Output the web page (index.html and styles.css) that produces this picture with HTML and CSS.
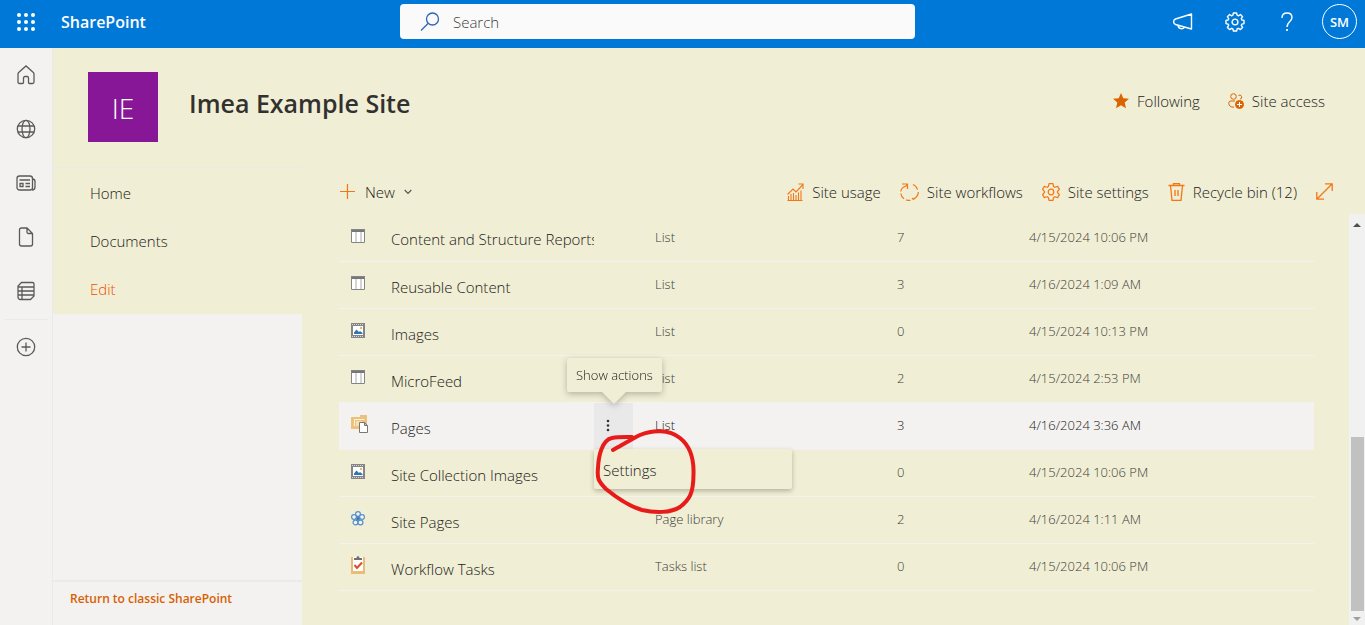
FILE: index.html
```html
<!DOCTYPE html>
<html lang="en">
<head>
<meta charset="utf-8">
<title>Site contents - Imea Example Site</title>
<link rel="stylesheet" href="styles.css">
</head>
<body>
<svg class="defs" aria-hidden="true">
  <symbol id="i-list" viewBox="0 0 14 14"><path fill="#fff" d="M0 3h14v11H0z"/><path fill="#d4d4d4" d="M4 3h2v10H4zM9 3h2v10H9z"/><path fill="#777" d="M0 0h14v3H0z"/><path fill="none" stroke="#858585" d="M.5 .5h13v13H.5z"/></symbol>
  <symbol id="i-image" viewBox="0 0 14 15"><path fill="#858588" d="M0 0h14v15H0z"/><path stroke="#d8d8d8" stroke-dasharray="1 1" d="M1 1.500h12M1 13.500h12"/><path fill="#fff" d="M2 3h10v9H2z"/><path fill="#2f75b0" d="M3 11V9.500L5.500 6.500 8 9l1-1 2.500 2v1z"/><path fill="#eab765" d="M9 4h2v2H9z"/></symbol>
</svg>

<header class="suite">
  <button class="plain waffle" aria-label="App launcher">
    <svg width="18" height="18" viewBox="0 0 18 18" fill="#fff"><circle cx="2" cy="2" r="2"/><circle cx="9" cy="2" r="2"/><circle cx="16" cy="2" r="2"/><circle cx="2" cy="9" r="2"/><circle cx="9" cy="9" r="2"/><circle cx="16" cy="9" r="2"/><circle cx="2" cy="16" r="2"/><circle cx="9" cy="16" r="2"/><circle cx="16" cy="16" r="2"/></svg>
  </button>
  <a class="brand" href="#">SharePoint</a>
  <form class="search" role="search">
    <svg width="20" height="20" viewBox="0 0 20 20" fill="none" stroke="#3264b4" stroke-width="1.300"><circle cx="12.500" cy="7" r="6"/><path d="M8.300 11.300 1 18.500"/></svg>
    <input class="search-input" type="text" placeholder="Search" aria-label="Search">
  </form>
  <div class="suite-actions">
    <button class="plain" aria-label="Announcements"><svg width="20" height="18" viewBox="0 0 20 18" fill="none" stroke="#fff" stroke-width="1.400" stroke-linejoin="round"><path d="M18.500 1v15L2.500 11.500C0 10.500 0 7 2.500 6z"/><path d="M5 12.300c.5 4 5.500 4.300 6.500 1.800"/></svg></button>
    <button class="plain" aria-label="Settings"><svg width="20" height="20" viewBox="0 0 20 20" fill="none" stroke="#fff" stroke-width="1.400" stroke-linejoin="round"><path d="M8.400 1h3.200l.5 2.200 1.300.6 2-1.300 2.200 2.200-1.300 2 .6 1.300 2.100.4v3.200l-2.100.5-.6 1.300 1.300 2-2.200 2.200-2-1.300-1.300.6-.5 2.100H8.400l-.5-2.100-1.300-.6-2 1.300-2.200-2.200 1.300-2-.6-1.300L1 11.600V8.400L3.100 8l.6-1.300-1.300-2 2.200-2.200 2 1.300 1.300-.6z"/><circle cx="10" cy="10" r="2.900"/></svg></button>
    <button class="plain" aria-label="Help"><svg width="20" height="20" viewBox="0 0 20 20" fill="none" stroke="#fff" stroke-width="1.400"><path d="M5 6C5 2.700 7 1 10 1s5 1.800 5 4.600C15 9.500 10 9.700 10 15"/><path d="M10 17v2" stroke-width="1.700"/></svg></button>
    <button class="plain avatar">SM</button>
  </div>
</header>

<div class="shell">
  <nav class="rail" aria-label="App bar">
    <a href="#" aria-label="Home"><svg viewBox="0 0 20 20"><path d="M2 9.200c0-.8.300-1.500.9-2L10 .9l7.100 6.300c.6.500.9 1.200.9 2V17c0 1-.6 1.500-1.500 1.500h-3c-.6 0-1-.4-1-1V13c0-1-.6-1.500-1.400-1.500H9c-.9 0-1.500.5-1.500 1.500v4.500c0 .6-.4 1-1 1h-3C2.600 18.500 2 18 2 17z"/></svg></a>
    <a href="#" aria-label="My sites"><svg viewBox="0 0 20 20"><circle cx="10" cy="10" r="8.700"/><ellipse cx="10" cy="10" rx="4" ry="8.700"/><path d="M2 7h16M2 13h16"/></svg></a>
    <a href="#" aria-label="News"><svg viewBox="0 0 20 20"><rect x="1" y="3" width="15.500" height="14" rx="2.500"/><path d="M16.500 6c1.800 0 2.500.8 2.500 2.500V14c0 2-1 3-3 3M3.500 7H14M9.500 10.500H14M9.500 13.500H14M4 10.500h3v3H4z"/></svg></a>
    <a href="#" aria-label="My files"><svg viewBox="0 0 20 20"><path d="M5.500 1H11l5.500 5.500V17c0 1.300-.7 2-2 2h-9c-1.300 0-2-.7-2-2V3c0-1.300.7-2 2-2zM11 1v4c0 1 .5 1.500 1.500 1.500h4"/></svg></a>
    <a href="#" aria-label="My lists"><svg viewBox="0 0 20 20"><path d="M5.500 1.500h11c1 0 1.500.5 1.500 1.500v12l-3.500 3.500h-10c-1.600 0-2.500-.9-2.500-2.500V5zM1.500 6H18M1.500 10H18M1.500 14H18M6 6v12.500"/></svg></a>
    <a class="create" href="#" aria-label="Create"><svg viewBox="0 0 20 20"><circle cx="10" cy="10" r="8.700"/><path d="M10 5.500v9M5.500 10h9"/></svg></a>
  </nav>

  <div class="site">
    <div class="site-head">
      <a class="site-logo" href="#">IE</a>
      <h1>Imea Example Site</h1>
      <div class="site-actions">
        <button class="plain command"><svg width="16" height="16" viewBox="0 0 16 16"><path fill="#dc6400" d="m8 0 2.300 5.300 5.700.5-4.300 3.800L13 15.300l-5-3-5 3 1.300-5.700L0 5.800l5.700-.5z"/></svg>Following</button>
        <button class="plain command"><svg width="16" height="16" viewBox="0 0 16 16" fill="none" stroke="#dc6400"><circle cx="5.500" cy="3.500" r="2.800"/><path d="M10.500 2.500a2 2 0 1 1 1.500 3.600M7 8H3C1.500 8 .8 8.800.8 10.300c0 2.700 2 3.900 5.200 3.900"/><circle cx="11.500" cy="11.500" r="4" fill="#dc6400"/><path stroke="#fff" d="M11.500 9v5M9 11.500h5"/></svg>Site access</button>
      </div>
    </div>

    <div class="site-body">
      <aside class="side">
        <nav class="side-nav" aria-label="Site">
          <a href="#">Home</a>
          <a href="#">Documents</a>
          <a class="edit" href="#">Edit</a>
        </nav>
        <a class="classic" href="#">Return to classic SharePoint</a>
      </aside>

      <main class="content">
        <div class="toolbar">
          <button class="plain command new"><svg width="16" height="16" viewBox="0 0 16 16" fill="none" stroke="#f57714" stroke-width="1.200"><path d="M7.500 0v15M0 7.500h15"/></svg>New<svg width="8" height="6" viewBox="0 0 8 6" fill="none" stroke="#555" stroke-width="1.200"><path d="m.7 1 3.300 3.300L7.300 1"/></svg></button>
          <div class="toolbar-right">
            <button class="plain command"><svg width="17" height="18" viewBox="0 0 17 18" fill="none" stroke="#f57714" stroke-width="1.100"><path d="M.5 11.500 6 6l3 3 7-7.500M11.500 1H16v5M1.500 13v4.500M4 11v6.500M6.500 10v7.500M9 12v5.500M11.500 9.500v8M14 7.500v10M.5 17.500h15"/></svg>Site usage</button>
            <button class="plain command"><svg width="19" height="18" viewBox="0 0 19 18" fill="none" stroke="#f57714" stroke-width="1.200"><path d="M7.500 1.500 6 3C3 4 1 6 .8 8.500M2 1h5.500v5M.8 10.500c.2 2 1.500 4 3.200 5.200M6 16.800c1.500.7 3 .8 4.500.5M13 1.500c2.300 1 3.800 2.500 4.500 5M18.300 9c0 2.500-1.500 5-3.800 6.500M12 15l1.500 1.500 1.500-1.500"/></svg>Site workflows</button>
            <button class="plain command"><svg width="18" height="18" viewBox="0 0 18 18" fill="none" stroke="#f57714" stroke-width="1.200" stroke-linejoin="round"><path d="m7 .7 4 0 .6 2.800 1.300.8 2.800-.9 1.700 3L15.500 8.500v1l1.900 2.100-1.700 3-2.800-.9-1.300.8-.6 2.800H7l-.6-2.800-1.300-.8-2.800.9-1.700-3 1.900-2.100v-1L.6 6.400l1.700-3 2.800.9 1.300-.8z"/><circle cx="9" cy="9" r="2.800"/></svg>Site settings</button>
            <button class="plain command"><svg width="17" height="18" viewBox="0 0 17 18" fill="none" stroke="#f57714" stroke-width="1.300"><path d="M.5 2.500h16M5.500 2.500V.7h6v1.800M2.500 2.500 4 17.300h9l1.500-14.800M7 7v6M10 7v6"/></svg>Recycle bin (12)</button>
            <button class="plain command" aria-label="Expand"><svg width="17" height="17" viewBox="0 0 17 17" fill="none" stroke="#f57714" stroke-width="1.300"><path d="M1 16 16 1M9 .8h7.200V8M.8 9v7.200H8"/></svg></button>
          </div>
        </div>

        <div class="scroller">
          <table class="items">
            <colgroup><col class="c-icon"><col class="c-name"><col class="c-act"><col class="c-type"><col class="c-count"><col></colgroup>
            <tbody>
              <tr><td class="icon"><svg width="14" height="14"><use href="#i-list"/></svg></td><td class="name"><a href="#">Content and Structure Reports</a></td><td></td><td class="type">List</td><td>7</td><td>4/15/2024 10:06 PM</td></tr>
              <tr><td class="icon"><svg width="14" height="14"><use href="#i-list"/></svg></td><td class="name"><a href="#">Reusable Content</a></td><td></td><td class="type">List</td><td>3</td><td>4/16/2024 1:09 AM</td></tr>
              <tr><td class="icon"><svg width="14" height="15"><use href="#i-image"/></svg></td><td class="name"><a href="#">Images</a></td><td></td><td class="type">List</td><td>0</td><td>4/15/2024 10:13 PM</td></tr>
              <tr><td class="icon"><svg width="14" height="14"><use href="#i-list"/></svg></td><td class="name"><a href="#">MicroFeed</a></td><td></td><td class="type">List</td><td>2</td><td>4/15/2024 2:53 PM</td></tr>
              <tr class="active"><td class="icon"><svg width="18" height="18" viewBox="0 0 18 18"><path fill="#ecc17c" d="M0 2h9V0h7v14H0z"/><path fill="none" stroke="#fff3da" d="M3.500 11V4.500h10"/><path fill="#f7dfb1" d="M5 6h6v5H5z"/><path fill="#fff" stroke="#777" d="M8.500 7.500h5l3 3v7h-8zM13.500 7.500v3h3"/></svg></td><td class="name"><a href="#">Pages</a></td><td class="act">
                <div class="act-box">
                  <button class="plain more" aria-label="Show actions"><svg width="4" height="13" viewBox="0 0 4 13" fill="#333"><circle cx="2" cy="2" r="1.300"/><circle cx="2" cy="6.500" r="1.300"/><circle cx="2" cy="11" r="1.300"/></svg></button>
                  <div class="tip" role="tooltip">Show actions</div>
                  <div class="menu" role="menu"><button class="plain menu-item" role="menuitem">Settings</button></div>
                  <svg class="ink" width="110" height="116" viewBox="0 0 110 116" fill="none" stroke="#e81b1b" stroke-width="4" stroke-linecap="round" stroke-linejoin="round"><path d="M19 47C28 42 38 36 46 32C58 27 75 26 86 35C96 43 100 56 99.500 71C99.500 91 95 97 86 104C77 110 61 110 48 107C34 103 23 95 12 86C4 78 3 75 4 65C4.500 53 8 37 18 35C25 33.500 32 34 38 34"/></svg>
                </div></td><td class="type">List</td><td>3</td><td>4/16/2024 3:36 AM</td></tr>
              <tr><td class="icon"><svg width="14" height="15"><use href="#i-image"/></svg></td><td class="name"><a href="#">Site Collection Images</a></td><td></td><td class="type">List</td><td>0</td><td>4/15/2024 10:06 PM</td></tr>
              <tr><td class="icon"><svg width="14" height="15" viewBox="0 0 14 15" fill="#eef5fb" stroke="#5c8fc0" stroke-width="1.200"><circle cx="7" cy="3" r="2.400"/><circle cx="3" cy="6" r="2.400"/><circle cx="11" cy="6" r="2.400"/><circle cx="4.500" cy="11.500" r="2.400"/><circle cx="9.500" cy="11.500" r="2.400"/><circle cx="7" cy="7.500" r="1.800" fill="#3578b5"/></svg></td><td class="name"><a href="#">Site Pages</a></td><td></td><td class="type">Page library</td><td>2</td><td>4/16/2024 1:11 AM</td></tr>
              <tr><td class="icon"><svg width="14" height="18" viewBox="0 0 14 18"><path fill="#e9bd78" d="M0 1h14v17H0z"/><path fill="#fff" d="M2 1h10v14H2z"/><path fill="#707070" d="M3 4V2h2.500c0-2.500 3-2.500 3 0H11v2z"/><path fill="none" stroke="#d9502c" stroke-width="2" d="m3.500 9 2.500 3 5-5.500"/></svg></td><td class="name"><a href="#">Workflow Tasks</a></td><td></td><td class="type">Tasks list</td><td>0</td><td>4/15/2024 10:06 PM</td></tr>
            </tbody>
          </table>
          <div class="scrollbar" aria-hidden="true">
            <svg width="8" height="4" viewBox="0 0 8 4"><path fill="#505050" d="M0 4 4 0l4 4z"/></svg>
            <div class="track"><div class="thumb"></div></div>
            <svg width="8" height="4" viewBox="0 0 8 4"><path fill="#a0a0a0" d="m0 0 4 4 4-4z"/></svg>
          </div>
        </div>
      </main>
    </div>
  </div>
</div>
</body>
</html>
```

FILE: styles.css
```css
:root {
  --olive: #f0eed4;
  --grey: #f3f2f1;
  --line: #eaeaea;
  --ink: #1b1a19;
  --muted: #3f3d3b;
}

* { box-sizing: border-box; }

body {
  margin: 0;
  height: 100vh;
  display: flex;
  flex-direction: column;
  overflow: hidden;
  background: var(--olive);
  color: var(--ink);
  font: 350 15px/20px "Open Sans", "Noto Sans", sans-serif;
}

a { color: inherit; text-decoration: none; }
svg { flex: none; display: block; }
.defs { position: absolute; width: 0; height: 0; }

.plain {
  display: flex;
  align-items: center;
  margin: 0;
  padding: 0;
  border: 0;
  background: none;
  color: inherit;
  font: inherit;
  white-space: nowrap;
}

/* Suite bar */
.suite {
  flex: none;
  height: 48px;
  display: grid;
  grid-template-columns: 52px 348fr 515px 442fr;
  align-items: center;
  padding-right: 8px;
  padding-bottom: 5px;
  background: #0078d7;
  color: #fff;
}
.waffle { justify-content: center; }
.brand { padding-left: 9px; font-size: 16px; font-weight: 600; }
.search {
  display: flex;
  align-items: center;
  gap: 13px;
  height: 35px;
  padding: 0 20px;
  border-radius: 4px;
  background: #fafafa;
}
.search-input {
  flex: 1;
  padding: 0;
  border: 0;
  outline: 0;
  background: none;
  color: var(--ink);
  font: inherit;
}
.search-input::placeholder { color: var(--muted); opacity: 1; }
.suite-actions {
  display: flex;
  align-items: center;
  justify-content: flex-end;
  gap: 32px;
}
.avatar {
  justify-content: center;
  width: 35px;
  height: 35px;
  margin-left: -7px;
  border: 1px solid #fff;
  border-radius: 50%;
  font-size: 13px;
  font-weight: 600;
}

/* App rail */
.shell { flex: 1; min-height: 0; display: flex; }
.rail {
  flex: none;
  width: 53px;
  display: flex;
  flex-direction: column;
  border-right: 1px solid var(--line);
  background: var(--grey);
}
.rail a {
  height: 54px;
  display: flex;
  align-items: center;
  justify-content: center;
}
.rail svg {
  width: 20px;
  height: 20px;
  fill: none;
  stroke: #5c5a58;
  stroke-width: 1.300;
}
.rail .create { margin: 1px 4px; border-top: 1px solid var(--line); }

/* Site header */
.site { flex: 1; min-width: 0; display: flex; flex-direction: column; }
.site-head {
  flex: none;
  display: flex;
  align-items: flex-start;
  padding: 24px 40px 25px 35px;
}
.site-logo {
  width: 70px;
  height: 70px;
  background: #881798;
  color: #fff;
  font-size: 28px;
  line-height: 72px;
  text-align: center;
}
h1 {
  margin: 0 0 0 31px;
  color: #323130;
  font-size: 25px;
  font-weight: 600;
  line-height: 62px;
}
.site-actions { display: flex; gap: 28px; margin: 19px 0 0 auto; }
.command { gap: 8px; }

/* Body */
.site-body { flex: 1; min-height: 0; display: flex; }
.side {
  flex: none;
  width: 249px;
  display: flex;
  flex-direction: column;
  border-top: 1px solid var(--line);
  background: var(--grey);
}
.side-nav { padding: 1px 0; background: var(--olive); }
.side-nav a { display: block; padding: 14px 37px; }
.side-nav .edit { color: #f04e00; }
.classic {
  margin-top: auto;
  padding: 7px 17px 16px;
  border-top: 2px solid var(--line);
  color: #d86000;
  font-size: 12px;
  font-weight: 600;
}
.content { flex: 1; min-width: 0; display: flex; flex-direction: column; }
.toolbar {
  flex: none;
  display: flex;
  justify-content: space-between;
  height: 47px;
  padding: 2px 32px 0 38px;
}
.new { gap: 9px; }
.toolbar-right { display: flex; gap: 19px; }
.scroller { flex: 1; min-height: 0; display: flex; }

/* Item table */
.items {
  flex: 1;
  width: 0;
  margin: 0 35px auto 37px;
  border-collapse: collapse;
  table-layout: fixed;
  color: var(--muted);
  font-size: 13px;
}
.c-icon { width: 52px; }
.c-name { width: 203px; }
.c-act { width: 39px; }
.c-type { width: 264px; }
.c-count { width: 132px; }
.items td {
  height: 47px;
  padding: 0 0 1px;
  border-bottom: 1px solid var(--grey);
  white-space: nowrap;
}
.items .icon { padding: 0 0 3px 12px; }
.items .name {
  padding: 4px 0 0;
  overflow: hidden;
  color: var(--ink);
  font-size: 15px;
}
.items .type { padding-left: 22px; }
.active { background: var(--grey); color: var(--ink); }
.items .act { padding: 0; }
.act-box { position: relative; }
.more { justify-content: center; width: 39px; height: 46px; padding-right: 11px; background: #eae9e9; }

.tip {
  position: absolute;
  bottom: 57px;
  left: -27px;
  padding: 8px 9px;
  border-radius: 2px;
  background: var(--olive);
  line-height: 18px;
  filter: drop-shadow(0 2px 3px rgba(0, 0, 0, .25));
}
.tip::after {
  content: "";
  position: absolute;
  top: 100%;
  left: calc(50% - 12px);
  border: 12px solid transparent;
  border-top-color: var(--olive);
  border-bottom: 0;
}
.menu {
  position: absolute;
  z-index: 1;
  top: 46px;
  left: 0;
  width: 198px;
  border-radius: 2px;
  background: var(--olive);
  box-shadow: 0 2px 5px rgba(0, 0, 0, .25);
}
.menu-item { width: 100%; height: 40px; padding: 2px 9px 0; font-size: 15px; }
.ink { position: absolute; z-index: 2; top: 0; left: 0; pointer-events: none; }

/* Scrollbar */
.scrollbar {
  flex: none;
  width: 16px;
  display: flex;
  flex-direction: column;
  align-items: center;
  gap: 6px;
  padding: 9px 0 4px;
  background: #f1f1f1;
}
.track { flex: 1; display: flex; flex-direction: column; justify-content: flex-end; }
.thumb { width: 13px; height: 46%; background: #c1c1c1; }
```
